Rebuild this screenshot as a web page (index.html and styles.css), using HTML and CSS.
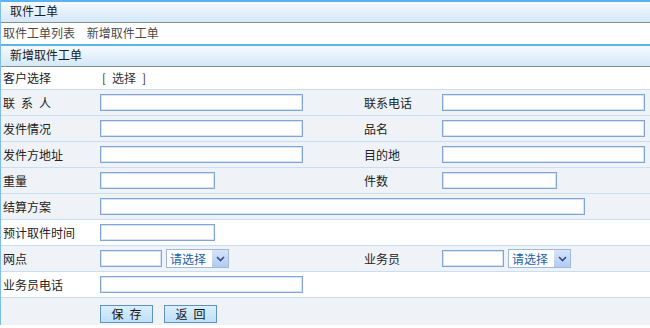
FILE: index.html
```html
<!DOCTYPE html>
<html lang="zh-CN">
<head>
    <meta charset="UTF-8">
    <title>取件工单</title>
    <link rel="stylesheet" href="styles.css">
</head>
<body>
    <div class="page">
        <!-- 标题 -->
        <div class="title-bar">取件工单</div>
        <div class="nav">
            <a href="#">取件工单列表</a>
            <a href="#">新增取件工单</a>
        </div>
        <div class="title-bar">新增取件工单</div>

        <!-- 表单 -->
        <div class="form">
            <div class="row white">
                <div class="label">客户选择</div>
                <div class="field"><a class="pick" href="#">[&ensp;选择&ensp;]</a></div>
            </div>
            <div class="row">
                <div class="label">联&ensp;系&ensp;人</div>
                <div class="field"><input class="txt"></div>
                <div class="label">联系电话</div>
                <div class="field"><input class="txt"></div>
            </div>
            <div class="row">
                <div class="label">发件情况</div>
                <div class="field"><input class="txt"></div>
                <div class="label">品名</div>
                <div class="field"><input class="txt"></div>
            </div>
            <div class="row">
                <div class="label">发件方地址</div>
                <div class="field"><input class="txt"></div>
                <div class="label">目的地</div>
                <div class="field"><input class="txt"></div>
            </div>
            <div class="row">
                <div class="label">重量</div>
                <div class="field"><input class="txt short"></div>
                <div class="label">件数</div>
                <div class="field"><input class="txt short"></div>
            </div>
            <div class="row">
                <div class="label">结算方案</div>
                <div class="field wide"><input class="txt long"></div>
            </div>
            <div class="row white">
                <div class="label">预计取件时间</div>
                <div class="field"><input class="txt short"></div>
            </div>
            <div class="row">
                <div class="label">网点</div>
                <div class="field">
                    <input class="txt tiny">
                    <span class="select">请选择<span class="arrow"><svg width="9" height="6" viewBox="0 0 9 6"><path d="M1 1 L4.5 4.5 L8 1" fill="none" stroke="#2a4f8a" stroke-width="1.6"/></svg></span></span>
                </div>
                <div class="label">业务员</div>
                <div class="field">
                    <input class="txt tiny">
                    <span class="select">请选择<span class="arrow"><svg width="9" height="6" viewBox="0 0 9 6"><path d="M1 1 L4.5 4.5 L8 1" fill="none" stroke="#2a4f8a" stroke-width="1.6"/></svg></span></span>
                </div>
            </div>
            <div class="row white">
                <div class="label">业务员电话</div>
                <div class="field"><input class="txt"></div>
            </div>
            <div class="row buttons">
                <div class="label"></div>
                <div class="field">
                    <button class="btn">保&ensp;存</button>
                    <button class="btn">返&ensp;回</button>
                </div>
            </div>
        </div>
    </div>
</body>
</html>
```

FILE: styles.css
```css
html, body {
    margin: 0;
    padding: 0;
    width: 650px;
    height: 328px;
    overflow: hidden;
}

body {
    font-family: "Noto Sans CJK SC", "DejaVu Sans", sans-serif;
    font-size: 12px;
    color: #222;
    background: #fff;
}

.page {
    border-left: 1px solid #7dbcec;
}

/* 标题栏 */
.title-bar {
    height: 20px;
    line-height: 18px;
    padding-left: 9px;
    border-top: 2px solid #5cb2ee;
    border-bottom: 1px solid #7f9183;
    background: linear-gradient(#f5faff, #d4e8fa);
    color: #1a1a1a;
}

.nav {
    height: 21px;
    line-height: 20px;
    padding-left: 2px;
}

.nav a {
    color: #4a4a4a;
    text-decoration: none;
    margin-right: 9px;
}

/* 表单行 */
.row {
    display: grid;
    grid-template-columns: 99px 262px 80px 1fr;
    align-items: center;
    height: 25px;
    border-bottom: 1px solid #c8def2;
    background: #eff3f8;
}

.row.white {
    background: #fff;
}

.form .row:first-child {
    height: 22px;
    line-height: 18px;
}

.label {
    padding-left: 2px;
    color: #222;
}

.field {
    display: flex;
    align-items: center;
    gap: 4px;
}

.field.wide {
    grid-column: 2 / 5;
}

.pick {
    margin-left: 2px;
    color: #333;
    text-decoration: none;
}

.txt {
    box-sizing: border-box;
    width: 203px;
    height: 17px;
    margin: 0;
    padding: 0 2px;
    border: 1px solid #7fa6d7;
    box-shadow: inset 0 0 0 1px #d6e3f3;
    background: #fff;
    font-size: 12px;
}

.txt.short {
    width: 115px;
}

.txt.long {
    width: 485px;
}

.txt.tiny {
    width: 62px;
}

/* 下拉框 */
.select {
    box-sizing: border-box;
    display: inline-flex;
    align-items: center;
    justify-content: space-between;
    width: 63px;
    height: 19px;
    padding-left: 3px;
    border: 1px solid #9fb9da;
    background: #fff;
    color: #1d62a3;
}

.arrow {
    display: flex;
    align-items: center;
    justify-content: center;
    width: 16px;
    height: 17px;
    background: linear-gradient(#d6e4fa, #b3cbf1);
}

/* 按钮 */
.row.buttons {
    height: 27px;
    border-bottom: none;
}

.btn {
    box-sizing: border-box;
    width: 53px;
    height: 18px;
    margin: 4px 7px 0 0;
    padding: 0;
    border: 1px solid #5f93c6;
    background: linear-gradient(#d9effc, #bfe0f7);
    font-family: "Noto Sans CJK SC", sans-serif;
    font-size: 12px;
    line-height: 16px;
    color: #111;
}
```
